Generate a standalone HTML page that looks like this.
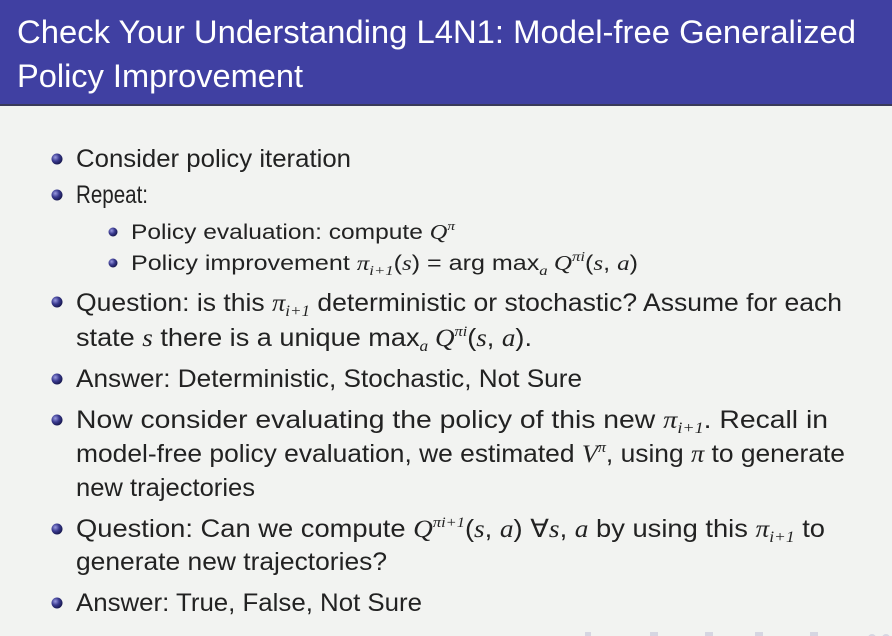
<!DOCTYPE html>
<html><head><meta charset="utf-8"><style>
html,body{margin:0;padding:0;width:892px;height:636px;overflow:hidden;background:#f2f3f1}
svg{display:block}
text{font-family:"Liberation Sans",sans-serif;fill:#222}
.t{fill:#fff;font-size:32px}
.b{font-size:25px}
.s{font-size:21px}
.i{font-family:"Liberation Serif",serif;font-style:italic}
</style></head><body>
<svg width="892" height="636" viewBox="0 0 892 636">
<defs><radialGradient id="g" cx="35%" cy="35%" r="70%"><stop offset="0" stop-color="#9a9ae0"/><stop offset="0.5" stop-color="#3a3a90"/><stop offset="1" stop-color="#15154a"/></radialGradient></defs>
<rect x="0" y="0" width="892" height="104" fill="#4040a2"/>
<rect x="0" y="104" width="892" height="2" fill="#3a3a5a"/>
<text class="t" x="17" y="43" textLength="839" lengthAdjust="spacingAndGlyphs">Check Your Understanding L4N1: Model-free Generalized</text>
<text class="t" x="17" y="87" textLength="286" lengthAdjust="spacingAndGlyphs">Policy Improvement</text>

<g fill="url(#g)">
<circle cx="57" cy="159" r="5.5"/><circle cx="57" cy="195" r="5.5"/>
<circle cx="113" cy="232" r="4.5"/><circle cx="113" cy="263" r="4.5"/>
<circle cx="57" cy="302" r="5.5"/><circle cx="57" cy="379" r="5.5"/>
<circle cx="57" cy="420" r="5.5"/><circle cx="57" cy="529" r="5.5"/>
<circle cx="57" cy="603" r="5.5"/>
</g>

<text class="b" x="76" y="167" textLength="275" lengthAdjust="spacingAndGlyphs">Consider policy iteration</text>
<text class="b" x="76" y="203" textLength="72" lengthAdjust="spacingAndGlyphs">Repeat:</text>
<text class="s" x="131" y="239" textLength="324" lengthAdjust="spacingAndGlyphs">Policy evaluation: compute <tspan class="i">Q</tspan><tspan class="i" font-size="13" dy="-9">π</tspan></text>
<text class="s" x="131" y="270" textLength="507" lengthAdjust="spacingAndGlyphs">Policy improvement <tspan class="i">π</tspan><tspan class="i" font-size="14" dy="5">i+1</tspan><tspan dy="-5">(</tspan><tspan class="i">s</tspan>) = arg max<tspan class="i" font-size="14" dy="5">a</tspan><tspan class="i" dy="-5"> Q</tspan><tspan class="i" font-size="14" dy="-9">πi</tspan><tspan dy="9">(</tspan><tspan class="i">s</tspan>, <tspan class="i">a</tspan>)</text>
<text class="b" x="76" y="311" textLength="766" lengthAdjust="spacingAndGlyphs">Question: is this <tspan class="i">π</tspan><tspan class="i" font-size="16" dy="5">i+1</tspan><tspan dy="-5"> deterministic or stochastic? Assume for each</tspan></text>
<text class="b" x="76" y="346" textLength="456" lengthAdjust="spacingAndGlyphs">state <tspan class="i">s</tspan> there is a unique max<tspan class="i" font-size="16" dy="5">a</tspan><tspan class="i" dy="-5"> Q</tspan><tspan class="i" font-size="15" dy="-10">πi</tspan><tspan dy="10">(</tspan><tspan class="i">s</tspan>, <tspan class="i">a</tspan>).</text>
<text class="b" x="76" y="387" textLength="506" lengthAdjust="spacingAndGlyphs">Answer: Deterministic, Stochastic, Not Sure</text>
<text class="b" x="76" y="428" textLength="752" lengthAdjust="spacingAndGlyphs">Now consider evaluating the policy of this new <tspan class="i">π</tspan><tspan class="i" font-size="16" dy="5">i+1</tspan><tspan dy="-5">. Recall in</tspan></text>
<text class="b" x="76" y="462" textLength="769" lengthAdjust="spacingAndGlyphs">model-free policy evaluation, we estimated <tspan class="i">V</tspan><tspan class="i" font-size="15" dy="-10">π</tspan><tspan dy="10">, using </tspan><tspan class="i">π</tspan> to generate</text>
<text class="b" x="76" y="496" textLength="179" lengthAdjust="spacingAndGlyphs">new trajectories</text>
<text class="b" x="76" y="537" textLength="749" lengthAdjust="spacingAndGlyphs">Question: Can we compute <tspan class="i">Q</tspan><tspan class="i" font-size="15" dy="-10">πi+1</tspan><tspan dy="10">(</tspan><tspan class="i">s</tspan>, <tspan class="i">a</tspan>) ∀<tspan class="i">s</tspan>, <tspan class="i">a</tspan> by using this <tspan class="i">π</tspan><tspan class="i" font-size="16" dy="5">i+1</tspan><tspan dy="-5"> to</tspan></text>
<text class="b" x="76" y="570" textLength="311" lengthAdjust="spacingAndGlyphs">generate new trajectories?</text>
<text class="b" x="76" y="611" textLength="346" lengthAdjust="spacingAndGlyphs">Answer: True, False, Not Sure</text>

<g fill="#d6d6e2">
<rect x="585" y="632" width="6" height="4"/><rect x="650" y="632" width="8" height="4"/><rect x="705" y="632" width="8" height="4"/><rect x="755" y="632" width="8" height="4"/><rect x="810" y="632" width="8" height="4"/><circle cx="872" cy="638" r="4"/><circle cx="886" cy="638" r="4"/>
</g>
</svg>
</body></html>
